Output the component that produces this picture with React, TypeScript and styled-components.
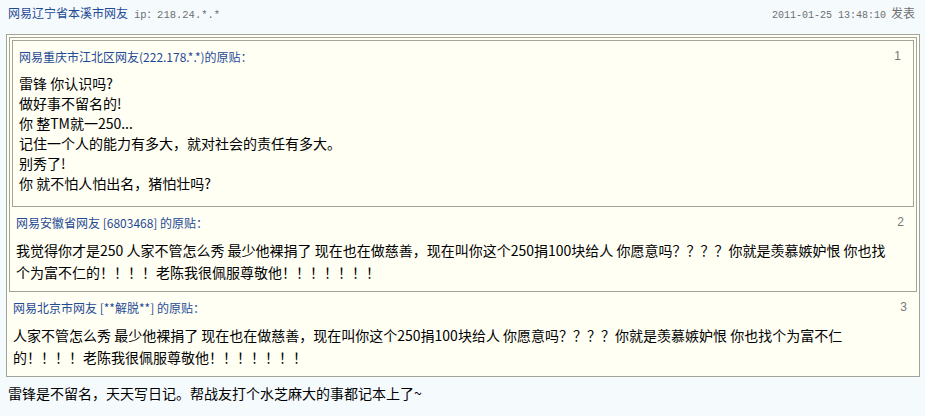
import React from 'react'
import styled, { createGlobalStyle } from 'styled-components'

const GlobalStyle = createGlobalStyle`
  html, body {
    margin: 0;
    padding: 0;
    background: #f5fafd;
  }
  body {
    font-family: "Noto Sans CJK SC", "Liberation Sans", sans-serif;
    color: #000;
  }
`

type Post = {
  author: string
  index: number
  lines: string[]
  lineHeight: number
}

const posts: Post[] = [
  {
    author: '网易重庆市江北区网友(222.178.*.*)的原贴：',
    index: 1,
    lineHeight: 20,
    lines: [
      '雷锋 你认识吗?',
      '做好事不留名的!',
      '你 整TM就一250...',
      '记住一个人的能力有多大，就对社会的责任有多大。',
      '别秀了!',
      '你 就不怕人怕出名，猪怕壮吗?',
    ],
  },
  {
    author: '网易安徽省网友 [6803468] 的原贴：',
    index: 2,
    lineHeight: 22,
    lines: [
      '我觉得你才是250 人家不管怎么秀 最少他裸捐了 现在也在做慈善，现在叫你这个250捐100块给人 你愿意吗？？？？你就是羡慕嫉妒恨 你也找',
      '个为富不仁的！！！！老陈我很佩服尊敬他！！！！！！！',
    ],
  },
  {
    author: '网易北京市网友 [**解脱**] 的原贴：',
    index: 3,
    lineHeight: 22,
    lines: [
      '人家不管怎么秀 最少他裸捐了 现在也在做慈善，现在叫你这个250捐100块给人 你愿意吗？？？？你就是羡慕嫉妒恨 你也找个为富不仁',
      '的！！！！老陈我很佩服尊敬他！！！！！！！',
    ],
  },
]

const Page = styled.div`
  padding: 0 5px 0 6px;
`

const TopBar = styled.div`
  display: flex;
  align-items: center;
  justify-content: space-between;
  height: 24px;
  padding: 0 5px 0 2px;
  margin-bottom: 10px;
  font-size: 12px;
`

const UserName = styled.span`
  color: #1f4a94;
`

const Meta = styled.span`
  color: #6f6f6f;
  font-family: "Liberation Mono", "Noto Sans CJK SC", monospace;
  font-size: 10.5px;
  margin-left: 6px;
`

const PostTime = styled.span`
  color: #6f6f6f;
  font-family: "Liberation Mono", "Noto Sans CJK SC", monospace;
  font-size: 10px;

  b {
    font-family: "Noto Sans CJK SC", sans-serif;
    font-weight: 400;
    font-size: 12px;
    margin-left: 5px;
  }
`

const QuoteBox = styled.div`
  border: 1px solid #a3a39b;
  background: #fffff4;
  padding: 2px 2px 0 2px;
`

const QuoteHead = styled.div<{ $top: number }>`
  display: flex;
  justify-content: space-between;
  align-items: center;
  height: 20px;
  margin-top: ${p => p.$top}px;
  padding: 0 10px 0 4px;
  font-size: 12px;
  color: #1f4a94;
`

const QuoteIndex = styled.span`
  color: #777;
  font-family: "Liberation Sans", sans-serif;
  font-size: 12px;
`

const QuoteBody = styled.div<{ $lh: number; $bottom: number }>`
  padding: 7px 10px ${p => p.$bottom}px 4px;
  font-size: 14px;
  line-height: ${p => p.$lh}px;
  color: #000;
`

const Reply = styled.div`
  padding: 6px 2px 6px;
  font-size: 14px;
  line-height: 20px;
`

const Quote = ({ level }: { level: number }) => {
  const post = posts[level]
  return (
    <QuoteBox>
      {level > 0 && <Quote level={level - 1} />}
      <QuoteHead $top={level > 0 ? 5 : 3}>
        <span>{post.author}</span>
        <QuoteIndex>{post.index}</QuoteIndex>
      </QuoteHead>
      <QuoteBody $lh={post.lineHeight} $bottom={level > 0 ? 8 : 13}>
        {post.lines.map((line, i) => (
          <React.Fragment key={i}>
            {i > 0 && <br />}
            {line}
          </React.Fragment>
        ))}
      </QuoteBody>
    </QuoteBox>
  )
}

export default function App() {
  return (
    <>
      <GlobalStyle />
      <Page>
        <TopBar>
          <span>
            <UserName>网易辽宁省本溪市网友</UserName>
            <Meta>ip：218.24.*.*</Meta>
          </span>
          <PostTime>
            2011-01-25 13:48:10<b>发表</b>
          </PostTime>
        </TopBar>
        <Quote level={2} />
        <Reply>雷锋是不留名，天天写日记。帮战友打个水芝麻大的事都记本上了~</Reply>
      </Page>
    </>
  )
}
